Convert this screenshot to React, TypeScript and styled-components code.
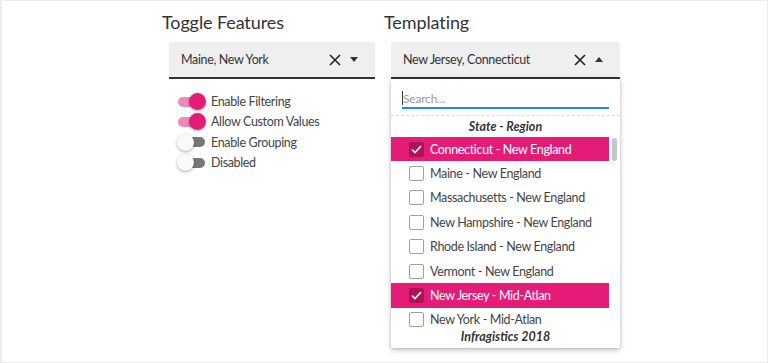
import styled, { createGlobalStyle } from 'styled-components'

const PINK = '#e41c77'

const GlobalStyle = createGlobalStyle`
  html, body {
    margin: 0;
    padding: 0;
    background: #fff;
  }
  body {
    font-family: Lato, 'Open Sans', sans-serif;
    color: #333;
  }
`

const Frame = styled.div`
  box-sizing: border-box;
  width: 768px;
  height: 363px;
  border: 1px solid #ececec;
  border-left-width: 2px;
  overflow: hidden;
  display: flex;
  gap: 9px;
  padding: 10px 0 0 160px;
`

const Column = styled.div<{ $width: number }>`
  width: ${p => p.$width}px;
  display: flex;
  flex-direction: column;
`

const Title = styled.h2`
  margin: 0 0 9px;
  font-size: 18px;
  font-weight: 400;
  line-height: 22px;
  letter-spacing: -0.1px;
  color: #333;
`

const ComboWrap = styled.div`
  position: relative;
  margin-left: 7px;
`

const Combo = styled.div`
  box-sizing: border-box;
  height: 37px;
  background: #efefef;
  border-bottom: 2px solid #333;
  border-radius: 3px 3px 0 0;
  display: flex;
  align-items: center;
  padding: 0 17px 0 12px;
  font-size: 12.5px;
  letter-spacing: -0.35px;
  color: #333;
`

const ComboText = styled.span`
  flex: 1;
  white-space: nowrap;
`

const ComboIcons = styled.span`
  display: flex;
  align-items: center;
  gap: 9px;
  color: #333;
`

const Toggles = styled.div`
  margin: 14px 0 0 15px;
  display: flex;
  flex-direction: column;
  gap: 3px;
`

const ToggleRow = styled.label`
  display: flex;
  align-items: center;
  gap: 6px;
  height: 17.3px;
  font-size: 12.5px;
  letter-spacing: -0.35px;
  color: #444;
`

const Switch = styled.span<{ $on: boolean }>`
  position: relative;
  width: 28px;
  height: 17px;
  &::before {
    content: '';
    position: absolute;
    left: 1px;
    right: 0;
    top: 3.5px;
    height: 10px;
    border-radius: 5px;
    background: ${p => (p.$on ? '#f288b7' : '#777')};
  }
  &::after {
    content: '';
    position: absolute;
    top: 0;
    left: ${p => (p.$on ? '12px' : '0')};
    width: 17px;
    height: 17px;
    border-radius: 50%;
    background: ${p => (p.$on ? PINK : '#fafafa')};
    box-shadow: 0 1px 3px rgba(0, 0, 0, 0.35);
  }
`

const Dropdown = styled.div`
  position: absolute;
  top: 37px;
  left: 0;
  right: 0;
  background: #fff;
  box-shadow: 0 2px 5px rgba(0, 0, 0, 0.25), 0 0 2px rgba(0, 0, 0, 0.12);
`

const SearchBox = styled.div`
  margin: 8px 11px 0;
  height: 19px;
  border-bottom: 2px solid #1a8cff;
  display: flex;
  align-items: flex-end;
  padding-bottom: 1px;
  font-size: 12px;
  letter-spacing: -0.2px;
  color: #9a9a9a;
`

const Caret = styled.span`
  width: 1px;
  height: 14px;
  background: #333;
  margin-bottom: 1px;
`

const Divider = styled.div`
  margin-top: 6px;
  border-top: 1px dashed #ddd;
`

const GroupHeader = styled.div`
  text-align: center;
  font-size: 12.5px;
  font-weight: 700;
  font-style: italic;
  color: #333;
  height: 21px;
  line-height: 21px;
`

const ListArea = styled.div`
  position: relative;
  height: 190px;
  overflow: hidden;
`

const ScrollThumb = styled.div`
  position: absolute;
  right: 3px;
  top: 1px;
  width: 5px;
  height: 23px;
  border-radius: 3px;
  background: #c6c6c6;
`

const Item = styled.div<{ $selected: boolean }>`
  box-sizing: border-box;
  height: 24.4px;
  margin-right: 11px;
  display: flex;
  align-items: center;
  gap: 6px;
  padding-left: 18px;
  font-size: 12.5px;
  letter-spacing: -0.35px;
  color: ${p => (p.$selected ? '#fff' : '#444')};
  background: ${p => (p.$selected ? PINK : 'transparent')};
  white-space: nowrap;
`

const Box = styled.span<{ $checked: boolean }>`
  box-sizing: border-box;
  flex-shrink: 0;
  width: 15px;
  height: 15px;
  border-radius: 2px;
  border: ${p => (p.$checked ? 'none' : '1.5px solid #a0a0a0')};
  background: ${p => (p.$checked ? '#ad1458' : '#fff')};
  display: flex;
  align-items: center;
  justify-content: center;
`

const Footer = styled.div`
  text-align: center;
  font-size: 12.5px;
  font-weight: 700;
  font-style: italic;
  color: #333;
  height: 21px;
  line-height: 20px;
`

const ClearIcon = () => (
  <svg width="12" height="12" viewBox="0 0 12 12">
    <path d="M1 1 L11 11 M11 1 L1 11" stroke="#222" strokeWidth="1.6" />
  </svg>
)

const ArrowIcon = ({ up }: { up?: boolean }) => (
  <svg width="8" height="5" viewBox="0 0 8 5">
    <path d={up ? 'M0 5 L4 0 L8 5 Z' : 'M0 0 L8 0 L4 5 Z'} fill="#333" />
  </svg>
)

const Check = () => (
  <svg width="11" height="9" viewBox="0 0 11 9">
    <path d="M1 4.5 L4 7.5 L10 1" stroke="#fff" strokeWidth="1.6" fill="none" />
  </svg>
)

const toggles = [
  { label: 'Enable Filtering', on: true },
  { label: 'Allow Custom Values', on: true },
  { label: 'Enable Grouping', on: false },
  { label: 'Disabled', on: false },
]

const states = [
  { name: 'Connecticut - New England', selected: true },
  { name: 'Maine - New England', selected: false },
  { name: 'Massachusetts - New England', selected: false },
  { name: 'New Hampshire - New England', selected: false },
  { name: 'Rhode Island - New England', selected: false },
  { name: 'Vermont - New England', selected: false },
  { name: 'New Jersey - Mid-Atlan', selected: true },
  { name: 'New York - Mid-Atlan', selected: false },
]

const App = () => (
  <>
    <GlobalStyle />
    <Frame>
      <Column $width={213}>
        <Title>Toggle Features</Title>
        <ComboWrap>
          <Combo>
            <ComboText>Maine, New York</ComboText>
            <ComboIcons>
              <ClearIcon />
              <ArrowIcon />
            </ComboIcons>
          </Combo>
        </ComboWrap>
        <Toggles>
          {toggles.map(t => (
            <ToggleRow key={t.label}>
              <Switch $on={t.on} />
              {t.label}
            </ToggleRow>
          ))}
        </Toggles>
      </Column>
      <Column $width={236}>
        <Title>Templating</Title>
        <ComboWrap>
          <Combo>
            <ComboText>New Jersey, Connecticut</ComboText>
            <ComboIcons>
              <ClearIcon />
              <ArrowIcon up />
            </ComboIcons>
          </Combo>
          <Dropdown>
            <SearchBox>
              <Caret />
              Search...
            </SearchBox>
            <Divider />
            <GroupHeader>State - Region</GroupHeader>
            <ListArea>
              <ScrollThumb />
              {states.map(s => (
                <Item key={s.name} $selected={s.selected}>
                  <Box $checked={s.selected}>{s.selected && <Check />}</Box>
                  {s.name}
                </Item>
              ))}
            </ListArea>
            <Footer>Infragistics 2018</Footer>
          </Dropdown>
        </ComboWrap>
      </Column>
    </Frame>
  </>
)

export default App
